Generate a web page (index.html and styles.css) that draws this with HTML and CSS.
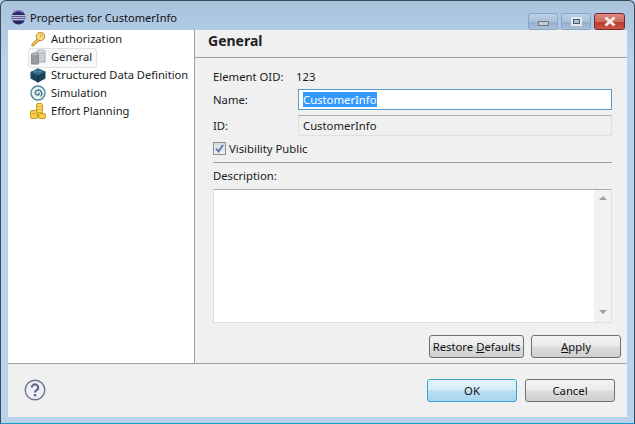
FILE: index.html
```html
<!DOCTYPE html>
<html lang="en">
<head>
    <meta charset="UTF-8">
    <meta name="viewport" content="width=device-width, initial-scale=1.0">
    <title>Properties for CustomerInfo</title>
    <link rel="stylesheet" href="styles.css">
</head>
<body>
<div class="window">
    <div class="titlebar">
        <svg class="app-icon" width="15" height="15" viewBox="0 0 15 15">
            <circle cx="7.500" cy="7.500" r="7" fill="#2c2a6e"/>
            <path d="M3 2.200a7 7 0 0 1 9 0" stroke="#9a7cc4" stroke-width="1.600" fill="none"/>
            <path d="M.8 5.800h13.400M.6 7.800h13.800M1 9.800h13" stroke="#f0f0f8" stroke-width="1.100"/>
        </svg>
        <span class="title">Properties for CustomerInfo</span>
        <div class="win-buttons">
            <div class="win-btn"><span class="min-glyph"></span></div>
            <div class="win-btn"><span class="max-glyph"></span></div>
            <div class="win-btn close-btn">
                <svg width="16" height="11" viewBox="0 0 16 11"><path d="M3.500 1.500l9 8M12.500 1.500l-9 8" stroke="#f2ecea" stroke-width="3"/></svg>
            </div>
        </div>
    </div>
    <div class="client">
        <div class="main">
            <ul class="tree">
                <li class="tree-item">
                    <svg width="16" height="16" viewBox="0 0 16 16">
                        <path d="M7.500 7.500L1.800 13.200l.2 1.600h2l.4-1.300 1.300-.3.300-1.400 1.300-.2 1.800-2" fill="#f0c85a" stroke="#c08a2a"/>
                        <circle cx="10.500" cy="5.500" r="4.200" fill="#f8dc80" stroke="#c08a2a"/>
                        <circle cx="11.500" cy="4.500" r="1.100" fill="#fff6d0" stroke="#c08a2a" stroke-width=".7"/>
                    </svg>
                    <span>Authorization</span>
                </li>
                <li class="tree-item selected">
                    <svg width="16" height="16" viewBox="0 0 16 16">
                        <rect x="7" y="2" width="8" height="11" fill="#c9d0d5" stroke="#a8b0b6"/>
                        <ellipse cx="11" cy="2.500" rx="4" ry="1.500" fill="#e2e6e9" stroke="#a8b0b6"/>
                        <rect x="1.500" y="5.500" width="7" height="9.500" fill="#969ea4" stroke="#868e94"/>
                        <ellipse cx="5" cy="5.500" rx="3.500" ry="1.500" fill="#b8bfc4" stroke="#868e94"/>
                    </svg>
                    <span>General</span>
                </li>
                <li class="tree-item">
                    <svg width="16" height="16" viewBox="0 0 16 16">
                        <path d="M.5 5L8 1.500 15.500 4.500v7L8 15.500.5 11.500z" fill="#1a4459"/>
                        <path d="M.5 5L8 8.500 15.500 4.500 8 1.500z" fill="#2f6c86"/>
                        <path d="M8 8.500v7" stroke="#0f2e3f"/>
                        <ellipse cx="5.500" cy="4.500" rx="1.800" ry="1" fill="#4b8aa4"/>
                        <ellipse cx="10" cy="4.500" rx="1.800" ry="1" fill="#4b8aa4"/>
                    </svg>
                    <span>Structured Data Definition</span>
                </li>
                <li class="tree-item">
                    <svg width="16" height="16" viewBox="0 0 16 16" fill="none">
                        <circle cx="8" cy="8" r="7" fill="#e8f0f2" stroke="#4d8799" stroke-width="1.400"/>
                        <path d="M8.200 8.200c.9-.5 1.300.8.500 1.400-1.300 1-3.400 0-3.400-1.900 0-2.300 2.800-3.400 4.700-2.300 2.200 1.300 2.300 4.500.6 6.100" stroke="#3d7488" stroke-width="1.400"/>
                    </svg>
                    <span>Simulation</span>
                </li>
                <li class="tree-item">
                    <svg width="16" height="16" viewBox="0 0 16 16">
                        <rect x="6.500" y=".5" width="6" height="13" rx="1.500" fill="#f8dc68" stroke="#c99a22"/>
                        <path d="M6.500 3.500h6M6.500 6.500h6M6.500 9.500h6" stroke="#d8ac30"/>
                        <rect x=".5" y="7.500" width="7" height="8" rx="1.500" fill="#f6cf48" stroke="#c99a22"/>
                        <path d="M.5 10.500h7" stroke="#d8ac30"/>
                        <rect x="8.500" y="10.500" width="7" height="5" rx="1.500" fill="#f6cf48" stroke="#c99a22"/>
                    </svg>
                    <span>Effort Planning</span>
                </li>
            </ul>
            <div class="page">
                <h2 class="page-title">General</h2>
                <div class="form">
                    <div class="oid-row"><span class="oid-label">Element OID:</span><span>123</span></div>
                    <div class="field-row">
                        <label class="field-label">Name:</label>
                        <div class="input active"><span class="text-selected">CustomerInfo</span></div>
                    </div>
                    <div class="field-row id-row">
                        <label class="field-label">ID:</label>
                        <div class="input readonly">CustomerInfo</div>
                    </div>
                    <div class="check-row">
                        <span class="checkbox">
                            <svg width="9" height="9" viewBox="0 0 9 9"><path d="M1 4.500l2.500 3L8 1" stroke="#5a70b8" stroke-width="1.800" fill="none"/></svg>
                        </span>
                        <span>Visibility Public</span>
                    </div>
                    <div class="rule"></div>
                    <div class="desc-label">Description:</div>
                    <div class="textarea">
                        <div class="scrollbar">
                            <span class="arrow-up"></span>
                            <span class="arrow-down"></span>
                        </div>
                    </div>
                    <div class="page-buttons">
                        <button class="btn restore">Restore <u>D</u>efaults</button>
                        <button class="btn apply"><u>A</u>pply</button>
                    </div>
                </div>
            </div>
        </div>
        <div class="footer">
            <svg class="help" width="22" height="22" viewBox="0 0 22 22">
                <circle cx="11" cy="11" r="9.800" fill="#eeeff3" stroke="#6d7a96" stroke-width="1.400"/>
                <path d="M7.800 8.500a3.200 3 0 1 1 4.800 2.600c-1.200.7-1.600 1.200-1.600 2.400" fill="none" stroke="#5d6a88" stroke-width="2.200"/>
                <rect x="9.800" y="15" width="2.400" height="2.400" fill="#5d6a88"/>
            </svg>
            <div class="footer-buttons">
                <button class="btn ok">OK</button>
                <button class="btn cancel">Cancel</button>
            </div>
        </div>
    </div>
</div>
</body>
</html>
```

FILE: styles.css
```css
* {
    box-sizing: border-box;
}

body {
    margin: 0;
    font-family: "Noto Sans", "Open Sans", sans-serif;
    font-size: 11.3px;
    color: #1a1a1a;
    background: #b9d1ea;
}

.window {
    width: 635px;
    height: 424px;
    display: flex;
    flex-direction: column;
    padding: 0 7px 6px 7px;
    border: 1px solid #3a4a58;
    border-radius: 6px 6px 0 0;
    border-bottom-color: #12a0c8;
    background: linear-gradient(#a9c3dd, #b9d3ec 60px);
}

.titlebar {
    height: 29px;
    flex: none;
    display: flex;
    align-items: center;
    margin: 0 -1px;
    padding-top: 3px;
}

.app-icon {
    margin: 0 4px 0 4px;
}

.title {
    font-size: 11.1px;
    color: #111;
}

.win-buttons {
    margin-left: auto;
    margin-right: 3px;
    align-self: flex-start;
    display: flex;
    gap: 3px;
    padding-top: 9px;
}

.win-btn {
    width: 30px;
    height: 17px;
    border: 1px solid #8aa5c2;
    border-radius: 3px;
    background: linear-gradient(#bdd2e6, #a9c1da 50%, #93aecb 55%, #a9c3dc);
    display: flex;
    align-items: center;
    justify-content: center;
}

.min-glyph {
    width: 11px;
    height: 5px;
    margin-top: 3px;
    background: #c8cdd2;
    border: 1px solid #6f7780;
}

.max-glyph {
    width: 11px;
    height: 9px;
    border: 2px solid #e6eaee;
    outline: 1px solid #4c5a6c;
    outline-offset: -3px;
    background: #a9c0d8;
}

.close-btn {
    width: 31px;
    border-color: #7a2430;
    background: linear-gradient(#dc8a80, #cf6a5e 50%, #b93a2c 55%, #c9584a);
}

.client {
    flex: 1;
    display: flex;
    flex-direction: column;
    background: #f0f0f0;
    min-height: 0;
}

.main {
    flex: 1;
    display: flex;
    min-height: 0;
    border-bottom: 1px solid #a0a0a0;
}

.tree {
    width: 186px;
    flex: none;
    margin: 0;
    padding: 0;
    list-style: none;
    background: #fff;
    border-right: 1px solid #a0a0a0;
    box-sizing: content-box;
}

.tree-item {
    height: 18px;
    display: flex;
    align-items: center;
    gap: 5px;
    padding-left: 22px;
    font-size: 11.15px;
    white-space: nowrap;
    position: relative;
}

.tree-item svg {
    flex: none;
}

.tree-item span {
    margin-bottom: 2px;
}

.tree-item.selected::before {
    content: "";
    position: absolute;
    left: 20px;
    top: 0;
    width: 67px;
    height: 18px;
    border: 1px solid #e2e2e2;
    border-radius: 3px;
    background: #f8f8f8;
}

.tree-item.selected > * {
    position: relative;
}

.page {
    flex: 1;
    display: flex;
    flex-direction: column;
    min-width: 0;
}

.page-title {
    margin: 0;
    height: 28px;
    flex: none;
    padding: 2px 0 0 13px;
    font-size: 14px;
    font-weight: bold;
    line-height: 18px;
    color: #222;
    border-bottom: 1px solid #a0a0a0;
}

.form {
    flex: 1;
    display: flex;
    flex-direction: column;
    min-height: 0;
    padding: 9px 15px 5px 18px;
}

.oid-row {
    display: flex;
    height: 19px;
    margin-bottom: 1px;
    align-items: center;
}

.oid-label {
    width: 83px;
}

.field-row {
    display: flex;
    align-items: center;
    height: 21px;
    margin-top: 2px;
}

.id-row {
    margin-top: 5px;
}

.field-label {
    width: 85px;
    flex: none;
}

.input {
    flex: 1;
    height: 100%;
    padding-left: 4px;
    display: flex;
    align-items: center;
    border: 1px solid #abadb3;
}

.input.active {
    background: #fff;
    border-color: #5a9ac8;
}

.input.readonly {
    background: #f0f0f0;
    border-color: #e0e0e0;
    border-top-color: #abadb3;
}

.text-selected {
    background: #3399ff;
    color: #fff;
}

.check-row {
    display: flex;
    align-items: center;
    gap: 3px;
    height: 18px;
    margin-top: 3px;
}

.checkbox {
    width: 13px;
    height: 13px;
    display: flex;
    align-items: center;
    justify-content: center;
    border: 1px solid #8e8f8f;
    background: linear-gradient(#d8dde4, #eef0f4);
}

.rule {
    height: 1px;
    margin-top: 5px;
    background: #a0a0a0;
}

.desc-label {
    height: 18px;
    margin-top: 4px;
    line-height: 18px;
}

.textarea {
    flex: 1;
    margin-top: 4px;
    display: flex;
    justify-content: flex-end;
    background: #fff;
    border: 1px solid #e0e0e0;
    border-top-color: #abadb3;
}

.scrollbar {
    width: 17px;
    display: flex;
    flex-direction: column;
    justify-content: space-between;
    align-items: center;
    padding: 6px 0 8px;
    background: #f2f2f2;
}

.arrow-up {
    border: 4px solid transparent;
    border-top: 0;
    border-bottom: 4px solid #a0a0a0;
}

.arrow-down {
    border: 4px solid transparent;
    border-bottom: 0;
    border-top: 4px solid #a0a0a0;
}

.page-buttons {
    display: flex;
    justify-content: flex-end;
    gap: 7px;
    margin: 12px -9px 0 0;
}

.btn {
    height: 23px;
    padding: 0 0 1px;
    font-family: inherit;
    font-size: 11.3px;
    white-space: nowrap;
    color: #111;
    border: 1px solid #707070;
    border-radius: 3px;
    background: linear-gradient(#f2f2f2, #ebebeb 48%, #dcdcdc 52%, #cfcfcf);
}

.restore {
    width: 95px;
}

.apply {
    width: 90px;
}

.footer {
    height: 53px;
    flex: none;
    display: flex;
    align-items: center;
    justify-content: space-between;
    padding: 0 12px 0 16px;
}

.help {
    margin-bottom: 2px;
}

.footer-buttons {
    display: flex;
    gap: 8px;
}

.ok,
.cancel {
    width: 90px;
}

.ok {
    border-color: #3c9fd0;
    background: linear-gradient(#e6f4fb, #d4ecf8 48%, #b8def2 52%, #a8d6ef);
}
```
